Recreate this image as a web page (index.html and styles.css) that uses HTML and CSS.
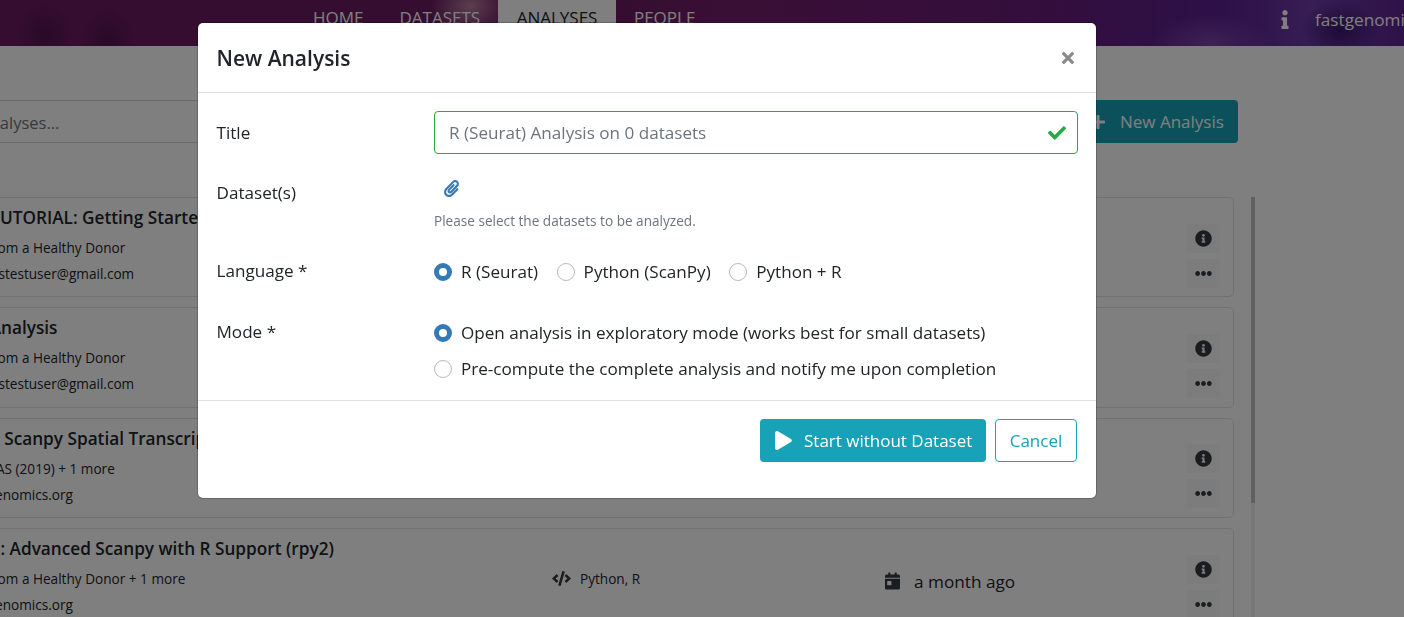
FILE: index.html
```html
<!DOCTYPE html>
<html lang="en">
<head>
    <meta charset="UTF-8">
    <title>Analyses</title>
    <link rel="stylesheet" href="styles.css">
</head>
<body>
    <svg class="icon-defs" xmlns="http://www.w3.org/2000/svg">
        <symbol id="i-check" viewBox="0 0 512 512"><path d="M173.898 439.404l-166.4-166.4c-9.997-9.997-9.997-26.206 0-36.204l36.203-36.204c9.997-9.998 26.207-9.998 36.204 0L192 312.69 432.095 72.596c9.997-9.997 26.207-9.997 36.204 0l36.203 36.204c9.997 9.997 9.997 26.206 0 36.204l-294.4 294.401c-9.998 9.997-26.207 9.997-36.204-.001z"/></symbol>
        <symbol id="i-info-circle" viewBox="0 0 512 512"><path d="M256 8C119.043 8 8 119.083 8 256c0 136.997 111.043 248 248 248s248-111.003 248-248C504 119.083 392.957 8 256 8zm0 110c23.196 0 42 18.804 42 42s-18.804 42-42 42-42-18.804-42-42 18.804-42 42-42zm56 254c0 6.627-5.373 12-12 12h-88c-6.627 0-12-5.373-12-12v-24c0-6.627 5.373-12 12-12h12v-64h-12c-6.627 0-12-5.373-12-12v-24c0-6.627 5.373-12 12-12h64c6.627 0 12 5.373 12 12v100h12c6.627 0 12 5.373 12 12v24z"/></symbol>
        <symbol id="i-info" viewBox="0 0 192 512"><path d="M20 424.229h20V279.771H20c-11.046 0-20-8.954-20-20V212c0-11.046 8.954-20 20-20h112c11.046 0 20 8.954 20 20v212.229h20c11.046 0 20 8.954 20 20V492c0 11.046-8.954 20-20 20H20c-11.046 0-20-8.954-20-20v-47.771c0-11.046 8.954-20 20-20zM96 0C56.235 0 24 32.235 24 72s32.235 72 72 72 72-32.235 72-72S135.764 0 96 0z"/></symbol>
        <symbol id="i-dots" viewBox="0 0 512 512"><path d="M328 256c0 39.8-32.2 72-72 72s-72-32.2-72-72 32.2-72 72-72 72 32.2 72 72zm104-72c-39.8 0-72 32.2-72 72s32.2 72 72 72 72-32.2 72-72-32.2-72-72-72zm-352 0c-39.8 0-72 32.2-72 72s32.2 72 72 72 72-32.2 72-72-32.2-72-72-72z"/></symbol>
        <symbol id="i-play" viewBox="0 0 448 512"><path d="M424.4 214.7L72.4 6.6C43.8-10.3 0 6.1 0 47.9V464c0 37.5 40.7 60.1 72.4 41.3l352-208c31.4-18.5 31.5-64.1 0-82.6z"/></symbol>
        <symbol id="i-plus" viewBox="0 0 448 512"><path d="M416 208H272V64c0-17.67-14.33-32-32-32h-32c-17.67 0-32 14.33-32 32v144H32c-17.67 0-32 14.33-32 32v32c0 17.67 14.33 32 32 32h144v144c0 17.67 14.33 32 32 32h32c17.67 0 32-14.33 32-32V304h144c17.67 0 32-14.33 32-32v-32c0-17.67-14.33-32-32-32z"/></symbol>
        <symbol id="i-times" viewBox="0 0 352 512"><path d="M242.72 256l100.07-100.07c12.28-12.28 12.28-32.19 0-44.48l-22.24-22.24c-12.28-12.28-32.19-12.28-44.48 0L176 189.28 75.93 89.21c-12.28-12.28-32.19-12.28-44.48 0L9.21 111.45c-12.28 12.28-12.28 32.19 0 44.48L109.28 256 9.21 356.07c-12.28 12.28-12.28 32.19 0 44.48l22.24 22.24c12.28 12.28 32.2 12.28 44.48 0L176 322.72l100.07 100.07c12.28 12.28 32.2 12.28 44.48 0l22.24-22.24c12.28-12.28 12.28-32.19 0-44.48L242.72 256z"/></symbol>
        <symbol id="i-clip" viewBox="0 0 448 512"><path d="M43.246 466.142c-58.43-60.289-57.341-157.511 1.386-217.581L254.392 34c44.316-45.332 116.351-45.336 160.671 0 43.89 44.894 43.943 117.329 0 162.276L232.214 383.128c-29.855 30.537-78.633 30.111-107.982-.998-28.275-29.97-27.368-77.473 1.452-106.953l143.743-146.835c6.182-6.314 16.312-6.422 22.626-.241l22.861 22.379c6.315 6.182 6.422 16.312.241 22.626L171.427 319.927c-4.932 5.045-5.236 13.428-.648 18.292 4.372 4.634 11.245 4.711 15.688.165l182.849-186.851c19.613-20.062 19.613-52.725-.011-72.798-19.189-19.627-49.957-19.637-69.154 0L90.39 293.295c-34.763 35.56-35.299 93.12-1.191 128.313 34.01 35.093 88.985 35.137 123.058.286l172.06-175.999c6.177-6.319 16.307-6.433 22.626-.256l22.877 22.364c6.319 6.177 6.434 16.307.256 22.626l-172.06 175.998c-59.576 60.938-155.943 60.216-214.77-.485z"/></symbol>
        <symbol id="i-code" viewBox="0 0 640 512"><path d="M278.9 511.5l-61-17.7c-6.4-1.8-10-8.5-8.2-14.9L346.2 8.7c1.8-6.4 8.5-10 14.9-8.2l61 17.7c6.4 1.8 10 8.5 8.2 14.9L293.8 503.3c-1.9 6.4-8.5 10.1-14.9 8.2zm-114-112.2l43.5-46.4c4.6-4.9 4.3-12.7-.8-17.2L117 256l90.6-79.7c5.1-4.5 5.5-12.3.8-17.2l-43.5-46.4c-4.5-4.8-12.1-5.1-17-.5L3.8 247.2c-5.1 4.7-5.1 12.8 0 17.5l144.1 135.1c4.9 4.6 12.5 4.4 17-.5zm327.2.6l144.1-135.1c5.1-4.7 5.1-12.8 0-17.5L492.1 112.1c-4.8-4.5-12.4-4.3-17 .5L431.6 159c-4.6 4.9-4.3 12.7.8 17.2L523 256l-90.6 79.7c-5.1 4.5-5.5 12.3-.8 17.2l43.5 46.4c4.5 4.9 12.1 5.1 17 .6z"/></symbol>
        <symbol id="i-calendar" viewBox="0 0 448 512"><path d="M0 464c0 26.5 21.5 48 48 48h352c26.5 0 48-21.5 48-48V192H0v272zm64-192c0-8.8 7.2-16 16-16h96c8.8 0 16 7.2 16 16v96c0 8.8-7.2 16-16 16H80c-8.8 0-16-7.2-16-16v-96zM400 64h-48V16c0-8.8-7.2-16-16-16h-32c-8.8 0-16 7.2-16 16v48H160V16c0-8.8-7.2-16-16-16h-32c-8.8 0-16 7.2-16 16v48H48C21.5 64 0 85.5 0 112v48h448v-48c0-26.5-21.5-48-48-48z"/></symbol>
    </svg>

    <div class="page">
        <!-- Top bar -->
        <header class="topbar">
            <nav class="nav">
                <a class="nav-item">Home</a>
                <a class="nav-item">Datasets</a>
                <a class="nav-item active">Analyses</a>
                <a class="nav-item">People</a>
            </nav>
            <div class="topbar-right">
                <svg class="topbar-info"><use href="#i-info"/></svg>
                <span class="user">fastgenomics</span>
            </div>
        </header>

        <!-- Search and add -->
        <div class="toolbar">
            <div class="search">Search analyses...</div>
            <button class="btn-new"><svg class="icon-plus"><use href="#i-plus"/></svg>New Analysis</button>
        </div>

        <!-- Analyses list -->
        <div class="list-wrap">
            <div class="list">
                <div class="card">
                    <div class="card-main">
                        <div class="card-title">Test TUTORIAL: Getting Started with Seurat</div>
                        <div class="card-line">Bone from a Healthy Donor</div>
                        <div class="card-line card-owner">fastgenomicstestuser@gmail.com</div>
                    </div>
                    <div class="card-lang"><svg class="icon-code"><use href="#i-code"/></svg>R</div>
                    <div class="card-date"><svg class="icon-cal"><use href="#i-calendar"/></svg>a month ago</div>
                    <div class="card-actions">
                        <button class="btn-icon"><svg class="icon-info"><use href="#i-info-circle"/></svg></button>
                        <button class="btn-icon"><svg class="icon-dots"><use href="#i-dots"/></svg></button>
                    </div>
                </div>
                <div class="card">
                    <div class="card-main">
                        <div class="card-title">QC1 Analysis</div>
                        <div class="card-line">Bone from a Healthy Donor</div>
                        <div class="card-line card-owner">fastgenomicstestuser@gmail.com</div>
                    </div>
                    <div class="card-lang"><svg class="icon-code"><use href="#i-code"/></svg>Python</div>
                    <div class="card-date"><svg class="icon-cal"><use href="#i-calendar"/></svg>a month ago</div>
                    <div class="card-actions">
                        <button class="btn-icon"><svg class="icon-info"><use href="#i-info-circle"/></svg></button>
                        <button class="btn-icon"><svg class="icon-dots"><use href="#i-dots"/></svg></button>
                    </div>
                </div>
                <div class="card">
                    <div class="card-main">
                        <div class="card-title">Guide Scanpy Spatial Transcriptomics</div>
                        <div class="card-line">Cell PNAS (2019) + 1 more</div>
                        <div class="card-line card-owner">hello@fastgenomics.org</div>
                    </div>
                    <div class="card-lang"><svg class="icon-code"><use href="#i-code"/></svg>Python</div>
                    <div class="card-date"><svg class="icon-cal"><use href="#i-calendar"/></svg>a month ago</div>
                    <div class="card-actions">
                        <button class="btn-icon"><svg class="icon-info"><use href="#i-info-circle"/></svg></button>
                        <button class="btn-icon"><svg class="icon-dots"><use href="#i-dots"/></svg></button>
                    </div>
                </div>
                <div class="card">
                    <div class="card-main">
                        <div class="card-title">Demo: Advanced Scanpy with R Support (rpy2)</div>
                        <div class="card-line">Bone from a Healthy Donor + 1 more</div>
                        <div class="card-line card-owner">hello@fastgenomics.org</div>
                    </div>
                    <div class="card-lang"><svg class="icon-code"><use href="#i-code"/></svg>Python, R</div>
                    <div class="card-date"><svg class="icon-cal"><use href="#i-calendar"/></svg>a month ago</div>
                    <div class="card-actions">
                        <button class="btn-icon"><svg class="icon-info"><use href="#i-info-circle"/></svg></button>
                        <button class="btn-icon"><svg class="icon-dots"><use href="#i-dots"/></svg></button>
                    </div>
                </div>
            </div>
            <div class="scrollbar"><div class="scrollbar-thumb"></div></div>
        </div>
    </div>

    <div class="backdrop"></div>

    <!-- New Analysis dialog -->
    <div class="modal">
        <div class="modal-header">
            <h2 class="modal-title">New Analysis</h2>
            <svg class="icon-close"><use href="#i-times"/></svg>
        </div>
        <div class="modal-body">
            <div class="form-row row-title">
                <label class="form-label">Title</label>
                <div class="title-input">
                    <span>R (Seurat) Analysis on 0 datasets</span>
                    <svg class="icon-check"><use href="#i-check"/></svg>
                </div>
            </div>
            <div class="form-row row-dataset">
                <label class="form-label">Dataset(s)</label>
                <div>
                    <svg class="icon-clip"><use href="#i-clip"/></svg>
                    <div class="help-text">Please select the datasets to be analyzed.</div>
                </div>
            </div>
            <div class="form-row row-language">
                <label class="form-label">Language *</label>
                <div class="radio-inline">
                    <span class="radio-item"><i class="radio checked"></i>R (Seurat)</span>
                    <span class="radio-item"><i class="radio"></i>Python (ScanPy)</span>
                    <span class="radio-item"><i class="radio"></i>Python + R</span>
                </div>
            </div>
            <div class="form-row row-mode">
                <label class="form-label">Mode *</label>
                <div class="radio-stack">
                    <span class="radio-item"><i class="radio checked"></i>Open analysis in exploratory mode (works best for small datasets)</span>
                    <span class="radio-item"><i class="radio"></i>Pre-compute the complete analysis and notify me upon completion</span>
                </div>
            </div>
        </div>
        <div class="modal-footer">
            <button class="btn-start"><svg class="icon-play"><use href="#i-play"/></svg>Start without Dataset</button>
            <button class="btn-cancel">Cancel</button>
        </div>
    </div>
</body>
</html>
```

FILE: styles.css
```css
* {
    box-sizing: border-box;
}

html, body {
    margin: 0;
    height: 617px;
    overflow: hidden;
}

body {
    font-family: "Open Sans", "Noto Sans", sans-serif;
    font-size: 16px;
    color: #212529;
    background: #ffffff;
}

.icon-defs {
    display: none;
}

button {
    font-family: inherit;
    border: none;
}

/* The page is scrolled sideways behind the dialog */
.page {
    margin-left: -100px;
    width: 1504px;
}

/* Top bar */
.topbar {
    height: 46px;
    display: flex;
    justify-content: space-between;
    color: #ffffff;
    background:
        radial-gradient(ellipse 26px 30px at 145px 34px, #521450 0%, transparent 100%),
        radial-gradient(ellipse 26px 34px at 208px 42px, #521450 0%, transparent 100%),
        radial-gradient(ellipse 40px 30px at 570px 6px, #b87ca0 0%, transparent 100%),
        radial-gradient(ellipse 60px 30px at 1310px 44px, #7c44a8 0%, transparent 100%),
        radial-gradient(ellipse 40px 30px at 1440px 30px, #3c1870 0%, transparent 100%),
        linear-gradient(90deg, #681a60 0%, #6a1a60 45%, #741e6c 55%, #681c78 75%, #5a2090 88%, #6e3ca8 94%, #5c2490 100%);
}

.nav {
    display: flex;
    margin-left: 395px;
}

.nav-item {
    padding: 6px 18px 0;
    font-size: 17px;
    line-height: 24px;
    text-transform: uppercase;
}

.nav-item.active {
    padding: 6px 18.5px 0;
    background: #ffffff;
    color: #212529;
}

.topbar-right {
    display: flex;
    align-items: center;
    height: 38px;
}

.topbar-info {
    width: 8px;
    height: 19px;
    fill: #ffffff;
    margin-right: 26px;
}

.user {
    font-size: 17.2px;
    width: 89px;
    overflow: hidden;
}

/* Search and add */
.toolbar {
    display: flex;
    margin: 54px 166px 0 0;
    height: 43px;
}

.search {
    flex: 1;
    padding-left: 24px;
    line-height: 43px;
    height: 43px;
    font-size: 16.5px;
    color: #6c757d;
    border-top: 1px solid #ced4da;
    border-bottom: 1px solid #ced4da;
}

.btn-new {
    width: 158px;
    margin-left: 20px;
    padding-left: 11px;
    display: flex;
    align-items: center;
    font-size: 17px;
    color: #ffffff;
    background: #17a2b8;
    border-radius: 4px;
}

.icon-plus {
    width: 14px;
    height: 16px;
    fill: #ffffff;
    margin-right: 15px;
}

/* Analyses list */
.list-wrap {
    display: flex;
    margin-top: 54px;
}

.list {
    width: 1299px;
    margin-left: 35px;
    display: flex;
    flex-direction: column;
    gap: 10px;
}

.card {
    height: 100.3px;
    flex: none;
    display: grid;
    grid-template-columns: 601px 333px 1fr 34px;
    align-items: center;
    padding: 0 13px 0 15px;
    border: 1px solid #dee2e6;
    border-radius: 5px;
}

.card-main {
    align-self: start;
    padding-top: 8px;
    min-width: 0;
    white-space: nowrap;
}

.card-title {
    font-size: 17.2px;
    font-weight: 600;
    line-height: 24px;
    margin-bottom: 5px;
}

.card-line {
    font-size: 13.6px;
    line-height: 26px;
}

.card-owner {
    margin-left: -30px;
}

.card-lang {
    display: flex;
    align-items: center;
    font-size: 13.6px;
}

.icon-code {
    width: 19px;
    height: 15px;
    fill: #343a40;
    margin-right: 9px;
}

.card-date {
    display: flex;
    align-items: center;
    font-size: 17.2px;
    margin-top: 6px;
}

.icon-cal {
    width: 15px;
    height: 18px;
    fill: #343a40;
    margin-right: 14px;
}

.card-actions {
    display: flex;
    flex-direction: column;
    gap: 6px;
    padding-top: 17px;
}

.btn-icon {
    width: 34px;
    height: 29px;
    padding: 0;
    display: flex;
    align-items: center;
    justify-content: center;
    background: #f8f9fa;
    border-radius: 4px;
}

.icon-info {
    width: 17px;
    height: 17px;
    fill: #343a40;
}

.icon-dots {
    width: 17px;
    height: 17px;
    fill: #343a40;
}

.scrollbar {
    width: 4px;
    height: 420px;
    margin-left: 17px;
    background: #f1f1f1;
}

.scrollbar-thumb {
    height: 306px;
    background: #c1c1c1;
}

.backdrop {
    position: fixed;
    top: 0;
    left: 0;
    width: 100%;
    height: 100%;
    background: rgba(0, 0, 0, 0.5);
}

/* New Analysis dialog */
.modal {
    position: fixed;
    top: 23px;
    left: 198px;
    width: 898px;
    height: 475px;
    background: #ffffff;
    border-radius: 5px;
    box-shadow: 0 0 0 1px rgba(0, 0, 0, 0.2);
    display: flex;
    flex-direction: column;
}

.modal-header {
    height: 70px;
    flex: none;
    display: flex;
    align-items: center;
    justify-content: space-between;
    padding: 0 22px 0 18.5px;
    border-bottom: 1px solid #dee2e6;
}

.modal-title {
    margin: 0;
    font-size: 21px;
    font-weight: 600;
}

.icon-close {
    width: 12px;
    height: 18px;
    fill: #8a8a8a;
}

.modal-body {
    flex: 1;
    padding: 18px 18px 0 18.5px;
}

.form-row {
    display: grid;
    grid-template-columns: 217.5px 1fr;
    font-size: 17.1px;
}

.form-label {
    line-height: 24px;
}

.row-title {
    align-items: center;
    height: 43px;
}

.title-input {
    height: 43px;
    display: flex;
    align-items: center;
    justify-content: space-between;
    padding: 0 11px 0 14px;
    color: #6c757d;
    border: 1px solid #28a745;
    border-radius: 4px;
}

.icon-check {
    width: 18px;
    height: 18px;
    fill: #28a745;
}

.row-dataset {
    margin-top: 27px;
}

.icon-clip {
    display: block;
    width: 15px;
    height: 17px;
    fill: #337ab7;
    margin: -1px 0 0 10px;
}

.help-text {
    margin-top: 15px;
    font-size: 13.6px;
    line-height: 18px;
    color: #6c757d;
}

.row-language {
    margin-top: 29px;
}

.radio-inline {
    display: flex;
    gap: 18.5px;
    padding-top: 1px;
}

.radio-item {
    display: flex;
    align-items: center;
    line-height: 24px;
    white-space: nowrap;
}

.radio {
    width: 18px;
    height: 18px;
    margin-right: 9px;
    border: 1px solid #b7bcc1;
    border-radius: 50%;
    flex: none;
}

.radio.checked {
    border: 5px solid #337ab7;
}

.row-mode {
    margin-top: 36px;
}

.radio-stack {
    display: flex;
    flex-direction: column;
    gap: 12px;
    padding-top: 1px;
}

.modal-footer {
    height: 98px;
    flex: none;
    display: flex;
    justify-content: flex-end;
    gap: 9px;
    padding: 18px 19px 0 0;
    border-top: 1px solid #dee2e6;
}

.btn-start {
    width: 226px;
    height: 43px;
    padding-left: 15px;
    display: flex;
    align-items: center;
    font-size: 17px;
    color: #ffffff;
    background: #17a2b8;
    border-radius: 4px;
}

.icon-play {
    width: 17px;
    height: 19px;
    fill: #ffffff;
    margin-right: 12px;
}

.btn-cancel {
    width: 82px;
    height: 43px;
    font-size: 17px;
    color: #17a2b8;
    background: #ffffff;
    border: 1px solid #17a2b8;
    border-radius: 4px;
}
```
